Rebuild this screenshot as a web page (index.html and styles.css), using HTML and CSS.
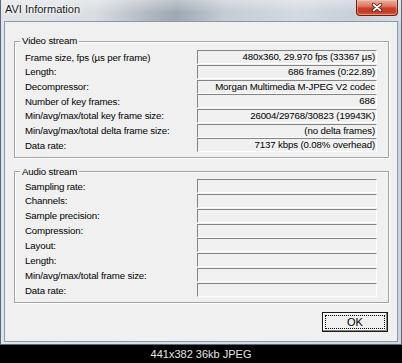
FILE: index.html
```html
<!DOCTYPE html>
<html lang="en">
<head>
  <meta charset="UTF-8">
  <title>AVI Information</title>
  <meta name="viewport" content="width=device-width, initial-scale=1.0">
  <link rel="stylesheet" href="styles.css">
</head>
<body>
  <div class="window">
    <div class="titlebar">
      <span class="title">AVI Information</span>
      <button class="close" aria-label="Close">
        <svg width="12" height="9" viewBox="0 0 12 9">
          <path d="M2.5 1.5 L9.5 7.5 M9.5 1.5 L2.5 7.5" stroke="#4a1308" stroke-width="3.4" stroke-linecap="round"/>
          <path d="M2.5 1.5 L9.5 7.5 M9.5 1.5 L2.5 7.5" stroke="#fff" stroke-width="1.8" stroke-linecap="round"/>
        </svg>
      </button>
    </div>

    <div class="client">
      <fieldset class="group video">
        <legend>Video stream</legend>
        <div class="row"><span class="label">Frame size, fps (µs per frame)</span><span class="value">480x360, 29.970 fps (33367 µs)</span></div>
        <div class="row"><span class="label">Length:</span><span class="value">686 frames (0:22.89)</span></div>
        <div class="row"><span class="label">Decompressor:</span><span class="value">Morgan Multimedia M-JPEG V2 codec</span></div>
        <div class="row"><span class="label">Number of key frames:</span><span class="value">686</span></div>
        <div class="row"><span class="label">Min/avg/max/total key frame size:</span><span class="value">26004/29768/30823 (19943K)</span></div>
        <div class="row"><span class="label">Min/avg/max/total delta frame size:</span><span class="value">(no delta frames)</span></div>
        <div class="row"><span class="label">Data rate:</span><span class="value">7137 kbps (0.08% overhead)</span></div>
      </fieldset>

      <fieldset class="group audio">
        <legend>Audio stream</legend>
        <div class="row"><span class="label">Sampling rate:</span><span class="value"></span></div>
        <div class="row"><span class="label">Channels:</span><span class="value"></span></div>
        <div class="row"><span class="label">Sample precision:</span><span class="value"></span></div>
        <div class="row"><span class="label">Compression:</span><span class="value"></span></div>
        <div class="row"><span class="label">Layout:</span><span class="value"></span></div>
        <div class="row"><span class="label">Length:</span><span class="value"></span></div>
        <div class="row"><span class="label">Min/avg/max/total frame size:</span><span class="value"></span></div>
        <div class="row"><span class="label">Data rate:</span><span class="value"></span></div>
      </fieldset>

      <div class="buttons">
        <button class="ok">OK</button>
      </div>
    </div>
  </div>

  <div class="caption">441x382 36kb JPEG</div>
</body>
</html>
```

FILE: styles.css
```css
body {
  margin: 0;
  width: 402px;
  height: 363px;
  overflow: hidden;
  background: #000;
  font-family: "Liberation Sans", Arial, sans-serif;
  font-size: 9.7px;
  letter-spacing: -0.15px;
  color: #000;
}
.window {
  box-sizing: border-box;
  height: 345px;
  border: 1px solid #5d6975;
  border-top: 0;
  padding: 0 3px 2px;
  background: linear-gradient(to right, #dde4eb, #d4dce4 50%, #cdd6df);
  display: flex;
  flex-direction: column;
}
.titlebar {
  height: 21px;
  margin: 0 -3px;
  padding: 0 3px 0 4px;
  display: flex;
  align-items: flex-start;
  background:
    linear-gradient(to bottom, rgba(255,255,255,0.35), rgba(255,255,255,0) 60%),
    linear-gradient(100deg, #e2e5e8 0, #d9dde1 24%, #aeb6be 38%, #9ea8b2 44%, #c3cbd3 56%, #d3dae1 74%, #c7cfd7 88%, #d6dde4 100%);
}
.title {
  margin-top: 3px;
  font-size: 11px;
  letter-spacing: 0;
  color: #1a1a1a;
  text-shadow: 0 0 5px #fff, 0 0 3px #fff;
}
.close {
  margin-left: auto;
  width: 42px;
  height: 16px;
  padding: 0 0 1px;
  border: 1px solid #6a2112;
  border-top: 0;
  border-radius: 0 0 4px 4px;
  background: linear-gradient(to bottom, #eab1a3 0, #de7b63 40%, #c9402a 55%, #c53b23 80%, #d8624a 100%);
  box-shadow: inset 0 0 0 1px rgba(255,210,200,0.45);
  display: flex;
  align-items: center;
  justify-content: center;
}
.client {
  flex: 1;
  border: 1px solid #8a99aa;
  background: #f0f0f0;
  padding: 0 8px 0 9px;
  display: flex;
  flex-direction: column;
}
.group {
  margin: 0;
  min-width: 0;
  border: 1px solid #a3a3a3;
  box-shadow: 1px 1px 0 #fff, inset 1px 1px 0 #fff;
  padding: 3px 11px 4px 10px;
}
.group legend {
  margin-left: -5px;
  padding: 0 2px;
  line-height: 12px;
  background: #f0f0f0;
}
.video {
  margin-top: 13px;
}
.audio {
  margin-top: 8px;
  padding-top: 1px;
  padding-bottom: 5px;
}
.row {
  display: flex;
  align-items: center;
}
.video .row {
  height: 14.67px;
}
.audio .row {
  height: 14.86px;
}
.label {
  flex: none;
  width: 172px;
  white-space: nowrap;
}
.value {
  box-sizing: border-box;
  width: 180px;
  height: 14px;
  padding-right: 1px;
  border-top: 1px solid #848484;
  border-left: 1px solid #848484;
  border-bottom: 1px solid #fff;
  border-right: 1px solid #fff;
  line-height: 12px;
  text-align: right;
  white-space: nowrap;
  overflow: hidden;
}
.buttons {
  display: flex;
  justify-content: flex-end;
  margin-top: 9px;
  padding-right: 1px;
}
.ok {
  width: 66px;
  height: 20px;
  padding: 0;
  border: 1px solid #1a1a1a;
  background: #f0f0f0;
  box-shadow: inset -1px -1px 0 #8a8a8a, inset 1px 1px 0 #fff;
  font-family: "Liberation Sans", Arial, sans-serif;
  font-size: 11px;
  color: #000;
  outline: 1px dotted #000;
  outline-offset: -4px;
}
.caption {
  height: 18px;
  line-height: 18px;
  text-align: center;
  color: #e4e4e4;
  font-size: 11px;
  letter-spacing: 0;
}
```
